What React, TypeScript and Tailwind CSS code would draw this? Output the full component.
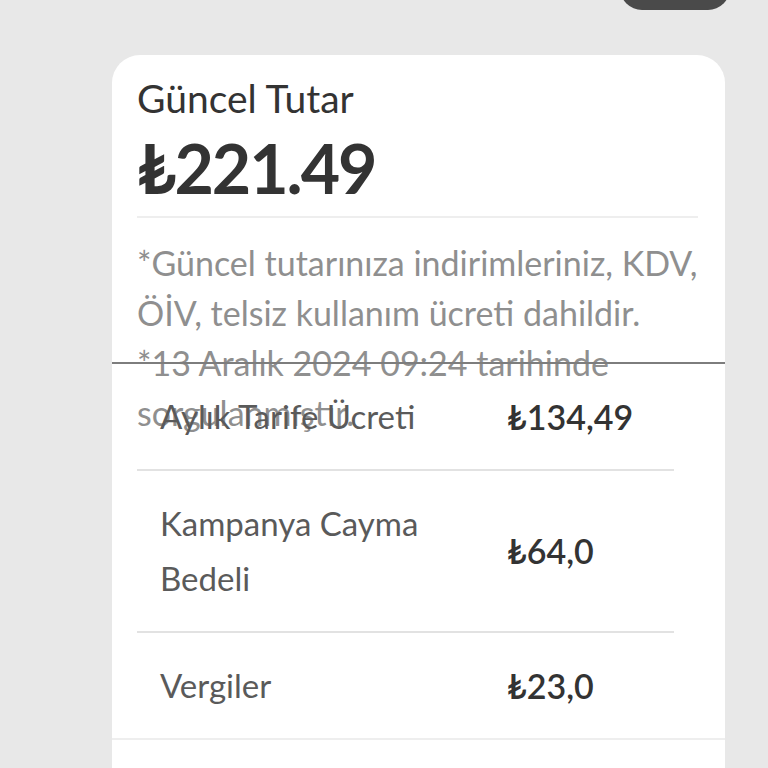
const rows = [
  { label: "Aylık Tarife Ücreti", value: "₺134,49" },
  { label: "Kampanya Cayma Bedeli", value: "₺64,0" },
  { label: "Vergiler", value: "₺23,0" },
];

export default function App() {
  return (
    <main
      className="min-h-screen bg-[#e8e8e8] overflow-hidden"
      style={{ fontFamily: "Lato, 'Liberation Sans', sans-serif" }}
    >
      {/* top pill button, cut off by the viewport */}
      <div className="flex justify-end pr-[38px]">
        <div className="-mt-[34px] h-[44px] w-[110px] rounded-full bg-[#4a4a4a]"></div>
      </div>

      <div className="ml-[112px] mr-[43px] mt-[45px] h-[760px] rounded-t-[28px] bg-white">
        <div className="pl-[25px] pr-[27px] pt-[20px]">
          <h2 className="text-[39px] leading-[1.2] text-[#333333]">Güncel Tutar</h2>
          <div className="mt-[12px] text-[68px] font-bold leading-none tracking-[-0.03em] text-[#333333]">
            ₺221.49
          </div>
          <div className="mt-[14px] h-[2px] bg-[#eeeeee]"></div>
          <p className="mt-[20px] whitespace-nowrap text-[34px] leading-[50px] text-[#8f8f8f]">
            *Güncel tutarınıza indirimleriniz, KDV,
            <br />
            ÖİV, telsiz kullanım ücreti dahildir.
            <br />
            *13 Aralık 2024 09:24 tarihinde
            <br />
            sorgulanmıştır.
          </p>
        </div>

        {/* breakdown list, drawn over the note */}
        <div className="relative -mt-[76px] border-t-2 border-b-2 border-t-[#7d7d7d] border-b-[#eeeeee]">
          <div className="pl-[25px] pr-[51px]">
            {rows.map((r, i) => (
              <div
                key={r.label}
                className={`flex items-center px-[23px] py-[25px] ${i < rows.length - 1 ? "border-b-2 border-[#e2e2e2]" : ""}`}
              >
                <div className="w-[347px] shrink-0 pr-[40px] text-[33px] leading-[55px] text-[#5a5a5a]">{r.label}</div>
                <div className="text-[34px] font-semibold leading-[55px] text-[#333333]">{r.value}</div>
              </div>
            ))}
          </div>
        </div>
      </div>
    </main>
  );
}
